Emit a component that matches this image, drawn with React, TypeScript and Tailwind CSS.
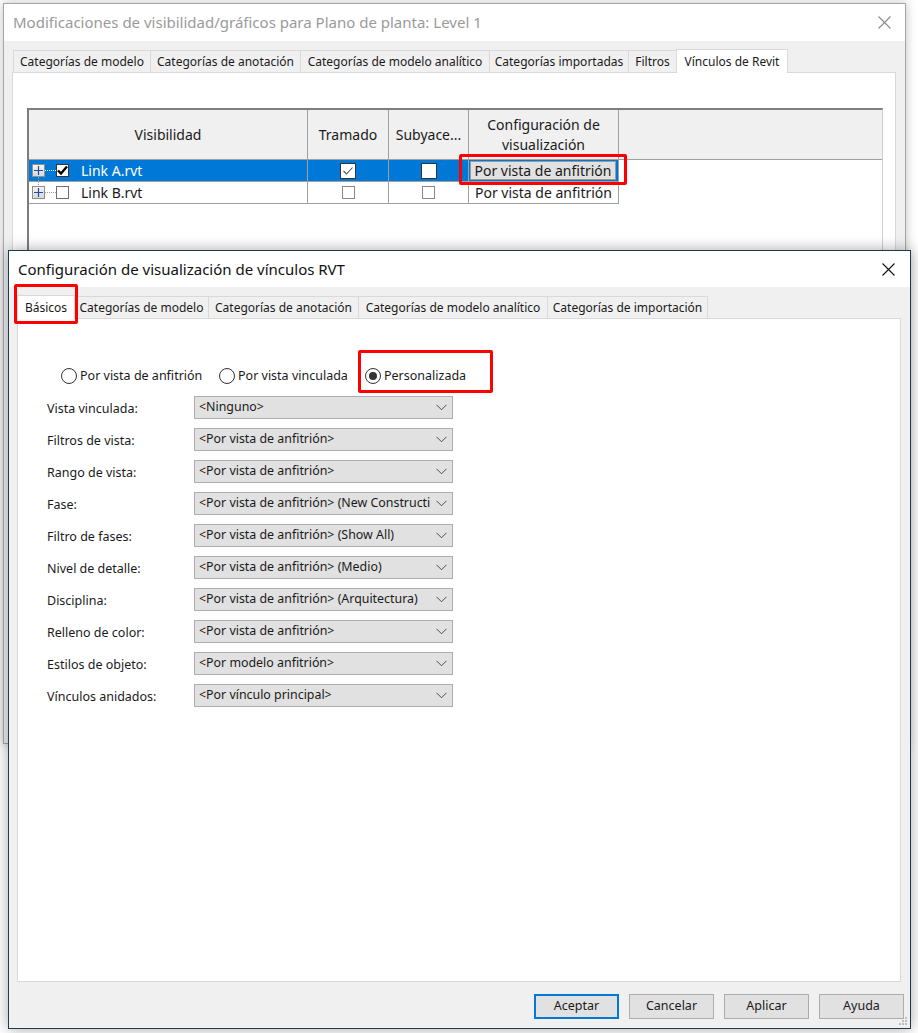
import React from "react";

const FONT = "font-['Noto_Sans',sans-serif]";

function Chevron() {
  return (
    <svg width="11" height="7" viewBox="0 0 11 7">
      <path d="M0.5 0.8 L5.5 5.8 L10.5 0.8" fill="none" stroke="#4a4a4a" strokeWidth="1" />
    </svg>
  );
}

function CloseX({ color, size }: { color: string; size: number }) {
  return (
    <svg width={size} height={size} viewBox={`0 0 ${size} ${size}`}>
      <path d={`M0.5 0.5 L${size - 0.5} ${size - 0.5} M${size - 0.5} 0.5 L0.5 ${size - 0.5}`} stroke={color} strokeWidth="1.1" />
    </svg>
  );
}

function Tab({ label, w, active, first }: { label: string; w: number; active?: boolean; first?: boolean }) {
  if (active) {
    return (
      <div
        className={`relative z-10 h-[24px] -mb-[1px] bg-white border border-b-0 border-[#d9d9d9] flex items-start justify-center pt-[3px] text-[12px] text-[#1a1a1a] whitespace-nowrap ${first ? "" : "-ml-[1px]"}`}
        style={{ width: w }}
      >
        {label}
      </div>
    );
  }
  return (
    <div
      className={`h-[22px] bg-[#f0f0f0] border border-b-0 border-[#d9d9d9] flex items-center justify-center pt-[1px] text-[12px] text-[#1a1a1a] whitespace-nowrap ${first ? "" : "-ml-[1px]"}`}
      style={{ width: w }}
    >
      {label}
    </div>
  );
}

function PlusBox() {
  return (
    <div className="w-[13px] h-[13px] border border-[#8f8f8f] bg-gradient-to-b from-[#f4f4f4] to-[#d8d8d8] flex items-center justify-center shrink-0">
      <svg width="9" height="9" viewBox="0 0 9 9">
        <path d="M0 4.5 H9 M4.5 0 V9" stroke="#1f4fa0" strokeWidth="1.2" />
      </svg>
    </div>
  );
}

function Radio({ checked, label }: { checked?: boolean; label: string }) {
  return (
    <div className="flex items-center">
      <div className="w-[16px] h-[16px] rounded-full border border-[#333] bg-white flex items-center justify-center shrink-0">
        {checked && <div className="w-[8px] h-[8px] rounded-full bg-[#333]" />}
      </div>
      <span className="ml-[3px] text-[12.5px] text-[#1a1a1a] whitespace-nowrap">{label}</span>
    </div>
  );
}

function Select({ value }: { value: string }) {
  return (
    <div className="w-[259px] h-[23px] bg-[#e1e1e1] border border-[#adadad] flex items-center pl-[4px] pr-[5px]">
      <span className="flex-1 overflow-hidden whitespace-nowrap text-[12.4px] text-[#1a1a1a]">{value}</span>
      <span className="ml-[6px] flex items-center">
        <Chevron />
      </span>
    </div>
  );
}

const rows: [string, string][] = [
  ["Vista vinculada:", "<Ninguno>"],
  ["Filtros de vista:", "<Por vista de anfitrión>"],
  ["Rango de vista:", "<Por vista de anfitrión>"],
  ["Fase:", "<Por vista de anfitrión> (New Constructi"],
  ["Filtro de fases:", "<Por vista de anfitrión> (Show All)"],
  ["Nivel de detalle:", "<Por vista de anfitrión> (Medio)"],
  ["Disciplina:", "<Por vista de anfitrión> (Arquitectura)"],
  ["Relleno de color:", "<Por vista de anfitrión>"],
  ["Estilos de objeto:", "<Por modelo anfitrión>"],
  ["Vínculos anidados:", "<Por vínculo principal>"],
];

function Btn({ label, primary }: { label: string; primary?: boolean }) {
  return (
    <div
      className={`w-[85px] h-[25px] bg-[#e1e1e1] flex items-center justify-center text-[12.5px] text-[#1a1a1a] ${
        primary ? "border-2 border-[#0078d7]" : "border border-[#adadad]"
      }`}
    >
      {label}
    </div>
  );
}

export default function App() {
  return (
    <div className={`relative w-[918px] h-[1033px] bg-white overflow-hidden ${FONT}`}>
      {/* Back dialog */}
      <div className="absolute left-[3px] top-[3px] w-[903px] h-[741px] border border-[#a6a6a6] bg-[#f0f0f0] shadow-[0_0_10px_rgba(0,0,0,0.25)] flex flex-col">
        <div className="h-[37px] bg-white flex items-center justify-between pl-[9px] pr-[14px] shrink-0">
          <span className="text-[15px] text-[#9a9a9a] whitespace-nowrap">
            Modificaciones de visibilidad/gráficos para Plano de planta: Level 1
          </span>
          <CloseX color="#8a8a8a" size={13} />
        </div>
        <div className="pt-[8px] flex flex-col flex-1">
          <div className="ml-[9px] flex items-end">
            <Tab label="Categorías de modelo" w={138} first />
            <Tab label="Categorías de anotación" w={151} />
            <Tab label="Categorías de modelo analítico" w={190} />
            <Tab label="Categorías importadas" w={140} />
            <Tab label="Filtros" w={49} />
            <Tab label="Vínculos de Revit" w={112} active />
          </div>
          <div className="ml-[8px] w-[884px] h-[640px] bg-white border border-[#d9d9d9] pt-[35px] pl-[14px] pr-[12px]">
            {/* table */}
            <div className="h-[580px] border-t-2 border-l-2 border-[#7d7d7d] border-r border-r-[#cfcfcf] bg-white text-[14px] text-[#1a1a1a] whitespace-nowrap">
              <div className="flex h-[50px] bg-[#f0f0f0] border-b border-[#a0a0a0]">
                <div className="w-[279px] border-r border-[#a0a0a0] flex items-center justify-center">Visibilidad</div>
                <div className="w-[81px] border-r border-[#a0a0a0] flex items-center justify-center">Tramado</div>
                <div className="w-[80px] border-r border-[#a0a0a0] flex items-center justify-center">Subyace...</div>
                <div className="w-[150px] border-r border-[#a0a0a0] flex items-center justify-center text-center leading-[20px]">
                  Configuración de
                  <br />
                  visualización
                </div>
                <div className="flex-1" />
              </div>
              {/* row 1 */}
              <div className="flex h-[22px]">
                <div className="relative w-[279px] bg-[#0078d7] border-r border-b border-[#a0a0a0] flex items-center pl-[3px]">
                  <PlusBox />
                  <div className="w-[11px] border-t border-dotted border-white" />
                  <div className="w-[13px] h-[13px] bg-white border border-[#333] flex items-center justify-center">
                    <svg width="11" height="11" viewBox="0 0 11 11">
                      <path d="M1 5.5 L4 8.5 L10 1.5" fill="none" stroke="#000" strokeWidth="2.4" />
                    </svg>
                  </div>
                  <span className="ml-[12px] text-white">Link A.rvt</span>
                  <div className="absolute left-[9px] top-[17px] h-[8px] border-l border-dotted border-[#9a9a9a]" />
                </div>
                <div className="w-[81px] bg-[#0078d7] border-r border-b border-[#a0a0a0] flex items-center justify-center">
                  <div className="w-[16px] h-[16px] bg-white border border-[#333] flex items-center justify-center">
                    <svg width="12" height="12" viewBox="0 0 12 12">
                      <path d="M1.5 6 L4.5 9 L10.5 2.5" fill="none" stroke="#555" strokeWidth="1.1" />
                    </svg>
                  </div>
                </div>
                <div className="w-[80px] bg-[#0078d7] border-r border-b border-[#a0a0a0] flex items-center justify-center">
                  <div className="w-[16px] h-[16px] bg-white border border-[#333]" />
                </div>
                <div className="w-[150px] bg-[#0078d7] border-r border-b border-[#a0a0a0] p-[1px] pr-[2px]">
                  <div className="h-full bg-[#e1e1e1] border border-[#9a9a9a] flex items-center justify-center">
                    Por vista de anfitrión
                  </div>
                </div>
              </div>
              {/* row 2 */}
              <div className="flex h-[22px]">
                <div className="w-[279px] border-r border-b border-[#a0a0a0] flex items-center pl-[3px]">
                  <PlusBox />
                  <div className="w-[11px] border-t border-dotted border-[#9a9a9a]" />
                  <div className="w-[13px] h-[13px] bg-white border border-[#6f6f6f]" />
                  <span className="ml-[12px]">Link B.rvt</span>
                </div>
                <div className="w-[81px] border-r border-b border-[#a0a0a0] flex items-center justify-center">
                  <div className="w-[13px] h-[13px] bg-white border border-[#888]" />
                </div>
                <div className="w-[80px] border-r border-b border-[#a0a0a0] flex items-center justify-center">
                  <div className="w-[13px] h-[13px] bg-white border border-[#888]" />
                </div>
                <div className="w-[150px] border-r border-b border-[#a0a0a0] flex items-center justify-center">
                  Por vista de anfitrión
                </div>
              </div>
            </div>
          </div>
        </div>
      </div>

      {/* Front dialog */}
      <div className="absolute left-[8px] top-[250px] w-[903px] h-[779px] border border-[#1d3a50] bg-[#f0f0f0] shadow-[0_0_14px_rgba(0,0,0,0.35)] flex flex-col">
        <div className="h-[36px] bg-white flex items-center justify-between pl-[9px] pr-[15px] shrink-0">
          <span className="text-[15px] text-[#111] whitespace-nowrap">Configuración de visualización de vínculos RVT</span>
          <CloseX color="#111" size={13} />
        </div>
        <div className="pt-[8px] flex flex-col">
          <div className="ml-[8px] flex items-end">
            <Tab label="Básicos" w={58} active first />
            <Tab label="Categorías de modelo" w={135} />
            <Tab label="Categorías de anotación" w={151} />
            <Tab label="Categorías de modelo analítico" w={190} />
            <Tab label="Categorías de importación" w={161} />
          </div>
          <div className="ml-[8px] w-[884px] h-[664px] bg-white border border-[#d9d9d9] pt-[49px]">
            <div className="flex items-center h-[16px] pl-[43px]">
              <div className="w-[158px]">
                <Radio label="Por vista de anfitrión" />
              </div>
              <div className="w-[146px]">
                <Radio label="Por vista vinculada" />
              </div>
              <Radio label="Personalizada" checked />
            </div>
            <div className="mt-[12px] pl-[29px] flex flex-col gap-[9px]">
              {rows.map(([l, v]) => (
                <div key={l} className="flex items-center h-[23px]">
                  <span className="w-[147px] text-[12.5px] text-[#1a1a1a] whitespace-nowrap pt-[3px]">{l}</span>
                  <Select value={v} />
                </div>
              ))}
            </div>
          </div>
          <div className="mt-[12px] pr-[6px] flex justify-end gap-[10px]">
            <Btn label="Aceptar" primary />
            <Btn label="Cancelar" />
            <Btn label="Aplicar" />
            <Btn label="Ayuda" />
          </div>
        </div>
        {/* size grip */}
        <div className="absolute right-[3px] bottom-[3px] grid grid-cols-3 gap-[1px]">
          <div className="w-[2px] h-[2px]" />
          <div className="w-[2px] h-[2px]" />
          <div className="w-[2px] h-[2px] bg-[#bdbdbd]" />
          <div className="w-[2px] h-[2px]" />
          <div className="w-[2px] h-[2px] bg-[#bdbdbd]" />
          <div className="w-[2px] h-[2px] bg-[#bdbdbd]" />
          <div className="w-[2px] h-[2px] bg-[#bdbdbd]" />
          <div className="w-[2px] h-[2px] bg-[#bdbdbd]" />
          <div className="w-[2px] h-[2px] bg-[#bdbdbd]" />
        </div>
      </div>

      {/* red highlight boxes */}
      <div className="absolute left-[459px] top-[154px] w-[168px] h-[31px] border-[3px] border-[#ff0000] rounded-[2px]" />
      <div className="absolute left-[14px] top-[284px] w-[64px] h-[40px] border-[3px] border-[#ff0000] rounded-[2px]" />
      <div className="absolute left-[358px] top-[350px] w-[135px] h-[43px] border-[3px] border-[#ff0000] rounded-[2px]" />
    </div>
  );
}
